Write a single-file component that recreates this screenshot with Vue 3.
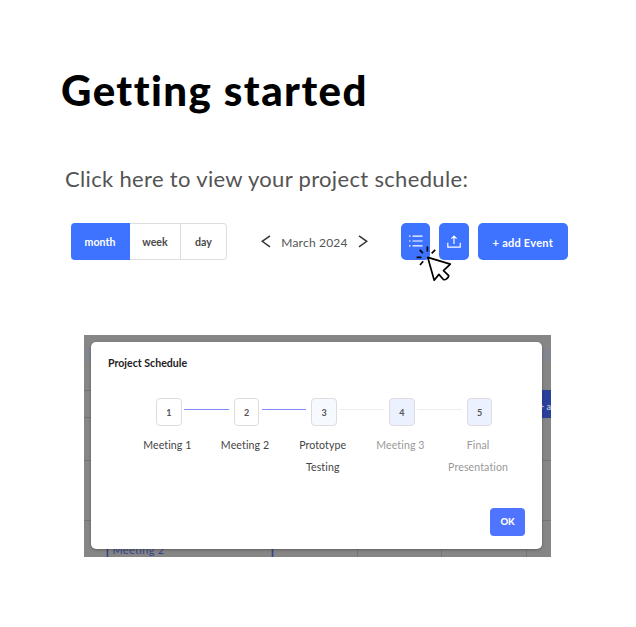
<script setup>
const steps = [
  { n: 1, lines: ['Meeting 1'], state: 'done' },
  { n: 2, lines: ['Meeting 2'], state: 'done' },
  { n: 3, lines: ['Prototype', 'Testing'], state: 'current' },
  { n: 4, lines: ['Meeting 3'], state: 'next' },
  { n: 5, lines: ['Final', 'Presentation'], state: 'next' },
]
</script>

<template>
  <main class="page">
    <h1>Getting started</h1>
    <p class="lead">Click here to view your project schedule:</p>

    <div class="toolbar">
      <div class="views">
        <button class="view month active">month</button>
        <button class="view week">week</button>
        <button class="view day">day</button>
      </div>
      <div class="nav">
        <svg width="10" height="14" viewBox="0 0 10 14"><path d="M9 .8 1.2 6.3 9 11.8" /></svg>
        <span>March 2024</span>
        <svg width="10" height="14" viewBox="0 0 10 14"><path d="M1 .8 8.8 6.3 1 11.8" /></svg>
      </div>
      <div class="actions">
        <button class="icon-btn">
          <svg width="14" height="12" viewBox="0 0 14 12">
            <path d="M3.6 1.2H13.6M3.6 6H13.6M3.6 10.8H13.6M0 1.2H1.5M0 6H1.5M0 10.8H1.5" />
          </svg>
          <svg class="cursor" width="37" height="37" viewBox="0 0 37 37">
            <path class="arrow" d="M11.8 11.4 18.2 34.2 22.9 28.4 27.4 33.5Q29 34.2 30.3 33 32.7 31.3 32.7 29.7L27.5 24.6 34.3 18.1Z" />
            <path class="spark" d="M11.4 .6V5.6M19.2 3.8 15.7 7.4M3.7 3.9 6.9 7.1M.6 11.4H5.4M7.2 15.3 4 19" />
          </svg>
        </button>
        <button class="icon-btn">
          <svg width="14" height="13" viewBox="0 0 14 13">
            <path d="M.8 7.8V12.1H13.2V7.8M7 9V1M4.4 3.6 7 1 9.6 3.6" />
          </svg>
        </button>
        <button class="add">+ add Event</button>
      </div>
    </div>

    <section class="stage">
      <svg class="behind" width="467" height="223" viewBox="0 0 467 223">
        <rect y="13" width="467" height="14" fill="#82858b" />
        <path d="M0 55.5H10M0 82.5H10M0 125.5H467M0 185.5H467M273.5 200V223M357.5 200V223M442.5 200V223" stroke="#757575" fill="none" />
        <rect x="440" y="55" width="27" height="28" fill="#2b409a" />
        <text class="peek-add" x="455" y="74.5">+ a</text>
        <path d="M23.5 200V223M188.5 200V223" stroke="#33458f" stroke-width="1.6" />
        <text class="peek" x="28.5" y="219">Meeting 2</text>
      </svg>
      <div class="dialog">
        <h2>Project Schedule</h2>
        <ol class="steps">
          <li v-for="s in steps" :key="s.n" :class="['step', s.state]">
            <div class="box">{{ s.n }}</div>
            <div class="label">
              <div v-for="l in s.lines" :key="l">{{ l }}</div>
            </div>
          </li>
        </ol>
        <button class="ok">OK</button>
      </div>
    </section>
  </main>
</template>

<style>
body {
  margin: 0;
  background: #fff;
}
</style>

<style scoped>
.page {
  box-sizing: border-box;
  width: 636px;
  height: 627px;
  padding-top: 65px;
  overflow: hidden;
  font-family: Lato, "Liberation Sans", sans-serif;
  color: #333;
  white-space: nowrap;
}
h1,
h2,
p,
ol {
  margin: 0;
  padding: 0;
  list-style: none;
}
button {
  box-sizing: border-box;
  border: 0;
  padding: 0;
  font: inherit;
  color: inherit;
}
h1 {
  margin-left: 61px;
  height: 50px;
  font-size: 42px;
  line-height: 50px;
  font-weight: 900;
  letter-spacing: 1.45px;
  color: #000;
}
.lead {
  margin: 49px 0 0 65px;
  height: 30px;
  font-size: 22px;
  line-height: 30px;
  letter-spacing: 0.33px;
  color: #545454;
}
.toolbar {
  display: flex;
  margin: 29px 0 0 71px;
  width: 497px;
  height: 37px;
  font-size: 11px;
}
.views {
  display: flex;
  width: 156px;
  font-size: 10.6px;
  letter-spacing: -0.15px;
}
.view {
  border: 1px solid #dedede;
  border-left: 0;
  background: #fff;
  font-weight: 700;
  padding-top: 1px;
  color: #4a4a4a;
}
.month {
  width: 59px;
  border-color: #3d73ff;
  border-radius: 4px 0 0 4px;
  background: #3d73ff;
  color: #fff;
}
.week {
  width: 51px;
}
.day {
  width: 46px;
  border-radius: 0 4px 4px 0;
}
.nav {
  display: flex;
  align-items: center;
  justify-content: space-between;
  width: 108px;
  margin-left: 33.5px;
  font-size: 12px;
  letter-spacing: 0.2px;
  color: #555;
}
.nav span {
  padding-top: 2px;
}
.nav svg {
  fill: none;
  stroke: #333;
  stroke-width: 1.5;
}
.actions {
  display: flex;
  gap: 9px;
  margin-left: 32.5px;
}
.icon-btn,
.add {
  border-radius: 5px;
  background: #3d73ff;
  color: #fff;
}
.icon-btn {
  position: relative;
  display: flex;
  align-items: center;
  justify-content: center;
  width: 29.4px;
}
.icon-btn > svg {
  fill: none;
  stroke: #fff;
  stroke-width: 1.2;
  margin-bottom: 1px;
}
.add {
  width: 90px;
  padding-top: 2px;
  font-weight: 700;
  letter-spacing: 0.25px;
}
.icon-btn > .cursor {
  position: absolute;
  z-index: 2;
  left: 14.5px;
  top: 23px;
  stroke: #000;
  stroke-width: 1.7;
  stroke-linejoin: round;
}
.icon-btn > .cursor .arrow {
  fill: #fff;
}
.stage {
  position: relative;
  box-sizing: border-box;
  margin: 75px 0 0 84px;
  width: 467px;
  height: 222px;
  padding: 6.5px 0 0 7px;
  overflow: hidden;
  background: #868686;
}
.behind {
  position: absolute;
  left: 0;
  top: 0;
}
.peek {
  font-size: 11px;
  letter-spacing: 0.3px;
  fill: #33458f;
}
.peek-add {
  font-size: 9px;
  font-weight: 700;
  fill: #b8c0dc;
}
.dialog {
  position: relative;
  box-sizing: border-box;
  display: flex;
  flex-direction: column;
  width: 451.3px;
  height: 207.5px;
  padding: 13.5px 17px;
  border-radius: 5px;
  background: #fff;
  box-shadow: 0 1px 3px rgba(0, 0, 0, 0.3);
}
h2 {
  height: 16px;
  font-size: 10.6px;
  line-height: 16px;
  font-weight: 700;
  color: #222;
}
.steps {
  display: grid;
  grid-template-columns: repeat(5, 77.7px);
  margin: 26.5px 0 0 21.5px;
}
.step {
  position: relative;
  display: flex;
  flex-direction: column;
  align-items: center;
}
.step:not(:last-child)::after {
  content: "";
  position: absolute;
  left: 54.5px;
  top: 11.2px;
  width: 44.5px;
  height: 1px;
  background: #eee;
}
.step.done:not(:last-child)::after {
  background: #7c8cfa;
}
.box {
  box-sizing: border-box;
  width: 25.5px;
  height: 28px;
  margin-left: 1px;
  border: 1px solid #dddde0;
  border-radius: 4px;
  font-size: 9px;
  line-height: 28px;
  text-align: center;
  font-weight: 700;
  color: #555;
}
.current .box {
  background: #f6faff;
}
.next .box {
  background: #ebf1ff;
}
.label {
  margin: 8px 2px 0 0;
  font-size: 10.6px;
  letter-spacing: 0.1px;
  line-height: 22px;
  text-align: center;
  color: #444;
}
.next .label {
  color: #999;
}
.ok {
  width: 35.5px;
  height: 28px;
  margin: auto 0 0 auto;
  border-radius: 4px;
  background: #4f74ff;
  color: #fff;
  font-size: 9.5px;
  font-weight: 900;
}
</style>
